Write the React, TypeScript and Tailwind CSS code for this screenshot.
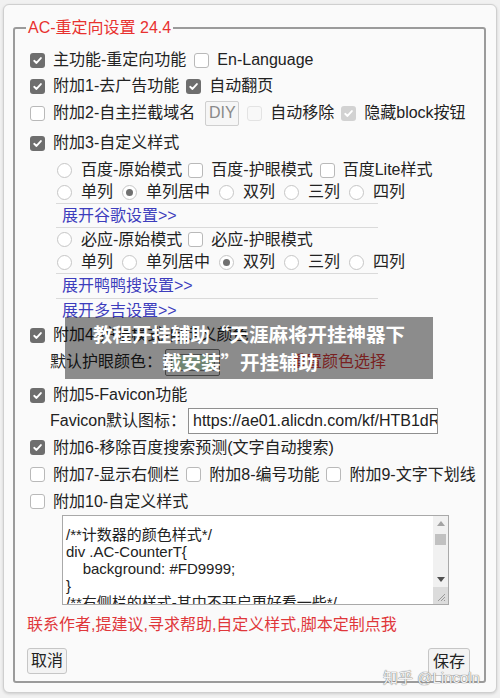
import React from 'react';

type OptProps = {
  label: string;
  on?: boolean;
  radio?: boolean;
  disabled?: boolean;
  className?: string;
};

function Box({ on = false, disabled = false }: { on?: boolean; disabled?: boolean }) {
  if (on) {
    return (
      <span
        className={`inline-flex h-[15px] w-[15px] shrink-0 items-center justify-center rounded-[3px] ${
          disabled ? 'bg-[#d2d2d2]' : 'bg-[#6e6e6e]'
        }`}
      >
        <svg viewBox="0 0 12 12" className="h-[11px] w-[11px]">
          <path d="M2.4 6.3 L4.9 8.7 L9.7 3.3" fill="none" stroke="white" strokeWidth="2" strokeLinecap="round" strokeLinejoin="round" />
        </svg>
      </span>
    );
  }
  return (
    <span
      className={`inline-block h-[15px] w-[15px] shrink-0 rounded-[3px] border ${
        disabled ? 'border-[#e3e3e3] bg-[#f8f8f8]' : 'border-[#b9b9b9] bg-white'
      }`}
    />
  );
}

function Dot({ on = false }: { on?: boolean }) {
  return (
    <span className="inline-flex h-[15px] w-[15px] shrink-0 items-center justify-center rounded-full border border-[#c6c6c6] bg-white">
      {on && <span className="h-[7px] w-[7px] rounded-full bg-[#707070]" />}
    </span>
  );
}

function Opt({ label, on, radio, disabled, className = '' }: OptProps) {
  return (
    <span className={`flex items-center ${className}`}>
      {radio ? <Dot on={on} /> : <Box on={on} disabled={disabled} />}
      <span className={radio ? 'ml-[9px]' : 'ml-[8px]'}>{label}</span>
    </span>
  );
}

function Divider() {
  return <div className="ml-[30px] h-px w-[322px] bg-[#dadada]" />;
}

function LinkRow({ text, h }: { text: string; h: string }) {
  return (
    <div className={`flex items-center pl-[36px] text-[#3d3dbd] ${h}`}>{text}</div>
  );
}

function Columns({ picked }: { picked: number }) {
  const cols = ['单列', '单列居中', '双列', '三列', '四列'];
  return (
    <>
      {cols.map((c, i) => (
        <Opt key={c} radio label={c} on={i === picked} className="mr-[9px]" />
      ))}
    </>
  );
}

export default function App() {
  return (
    <div className="relative min-h-screen w-full bg-[#f1f1f1] pl-[3px] pt-[4px] font-['Liberation_Sans','Noto_Sans_CJK_SC',sans-serif] text-[16px] text-[#222]">
      <div className="h-[689px] w-[494px] rounded-[6px] border border-[#cfcfcf] bg-[#fafafa] pl-[9px] pr-[10px] pt-[13px] shadow-[0_1px_3px_rgba(0,0,0,0.15)]">
        <fieldset className="min-w-0 rounded-[3px] border-2 border-[#9b9b9b] px-[11px] pb-[5px]">
          <legend className="px-[2px] leading-[20px] text-[#e8312f]">AC-重定向设置 24.4</legend>

          <div className="whitespace-nowrap pt-[9px]">
            <div className="flex h-[26px] items-center pl-[4px]">
              <Opt on label="主功能-重定向功能" className="mr-[8px]" />
              <Opt label="En-Language" />
            </div>
            <div className="flex h-[26px] items-center pl-[4px]">
              <Opt on label="附加1-去广告功能" className="mr-[7px]" />
              <Opt on label="自动翻页" />
            </div>
            <div className="flex h-[28px] items-center pl-[4px]">
              <Opt label="附加2-自主拦截域名" className="mr-[10px]" />
              <span className="flex h-[25px] w-[34px] items-center justify-center rounded-[2px] border border-[#cfcfcf] bg-[#f6f6f6] text-[#8a8a8a]">
                DIY
              </span>
              <Opt disabled label="自动移除" className="ml-[8px] mr-[7px]" />
              <Opt disabled on label="隐藏block按钮" />
            </div>
            <div className="flex h-[32px] items-center pl-[4px]">
              <Opt on label="附加3-自定义样式" />
            </div>

            {/* 百度 */}
            <div className="flex h-[22px] items-center pl-[31px]">
              <Opt radio label="百度-原始模式" className="mr-[6px]" />
              <Opt label="百度-护眼模式" className="mr-[7px]" />
              <Opt label="百度Lite样式" />
            </div>
            <div className="flex h-[22px] items-center pl-[31px]">
              <Columns picked={1} />
            </div>
            <Divider />
            <LinkRow text="展开谷歌设置>>" h="h-[23px]" />
            <Divider />

            {/* 必应 */}
            <div className="flex h-[23px] items-center pl-[31px]">
              <Opt radio label="必应-原始模式" className="mr-[6px]" />
              <Opt label="必应-护眼模式" />
            </div>
            <div className="flex h-[22px] items-center pl-[31px]">
              <Columns picked={2} />
            </div>
            <Divider />
            <LinkRow text="展开鸭鸭搜设置>>" h="h-[24px]" />
            <Divider />
            <LinkRow text="展开多吉设置>>" h="h-[23px]" />

            <div className="flex h-[26px] items-center pl-[4px]">
              <Opt on label="附加4-护眼模式-自定义颜色" />
            </div>
            <div className="flex h-[28px] items-center pl-[24px]">
              <span>默认护眼颜色：</span>
              <span className="ml-[3px] flex h-[27px] w-[55px] items-center justify-center rounded-[2px] border border-[#7a7a7a] bg-[#efefef]">
                <span className="h-[17px] w-[44px] border border-[#8a8a8a] bg-[#c7edcc]" />
              </span>
              <span className="ml-[70px] text-[#d83a3a]">重置颜色选择</span>
            </div>
            <div className="mt-[6px] flex h-[26px] items-center pl-[4px]">
              <Opt on label="附加5-Favicon功能" />
            </div>
            <div className="flex h-[26px] items-center pl-[24px]">
              <span className="w-[138px]">Favicon默认图标：</span>
              <span className="flex h-[26px] w-[250px] items-center overflow-hidden border border-[#8f8f8f] bg-white pl-[4px]">
                https://ae01.alicdn.com/kf/HTB1dR'Y
              </span>
            </div>
            <div className="flex h-[27px] items-center pl-[4px]">
              <Opt on label="附加6-移除百度搜索预测(文字自动搜索)" />
            </div>
            <div className="flex h-[27px] items-center pl-[4px]">
              <Opt label="附加7-显示右侧栏" className="mr-[7px]" />
              <Opt label="附加8-编号功能" className="mr-[7px]" />
              <Opt label="附加9-文字下划线" />
            </div>
            <div className="flex h-[27px] items-center pl-[4px]">
              <Opt label="附加10-自定义样式" />
            </div>

            {/* 自定义样式 textarea */}
            <div className="ml-[36px] flex h-[90px] w-[387px] border border-[#a9a9a9] bg-white">
              <div className="flex-1 overflow-hidden whitespace-pre pl-[3px] pt-[10px] text-[15px] leading-[17px] text-[#222]">
                {'/**计数器的颜色样式*/\ndiv .AC-CounterT{\n    background: #FD9999;\n}\n/**右侧栏的样式-其中不开启更好看一些*/'}
              </div>
              <div className="flex w-[15px] flex-col bg-[#f1f1f1]">
                <div className="flex h-[15px] items-center justify-center">
                  <svg viewBox="0 0 8 5" className="h-[5px] w-[8px]">
                    <path d="M4 0 L8 5 L0 5 Z" fill="#a3a3a3" />
                  </svg>
                </div>
                <div className="mx-[2px] mt-[3px] h-[11px] bg-[#c1c1c1]" />
                <div className="flex-1" />
                <div className="flex h-[15px] items-center justify-center">
                  <svg viewBox="0 0 8 5" className="h-[5px] w-[8px]">
                    <path d="M0 0 L8 0 L4 5 Z" fill="#505050" />
                  </svg>
                </div>
                <div className="flex h-[17px] items-end justify-end bg-[#dcdcdc] p-[2px]">
                  <svg viewBox="0 0 10 10" className="h-[10px] w-[10px]">
                    <path d="M9 2 L2 9 M9 5 L5 9 M9 8 L8 9" stroke="#9a9a9a" strokeWidth="1" />
                  </svg>
                </div>
              </div>
            </div>

            <div className="mt-[7px] flex h-[26px] items-center pl-[1px] text-[#e0373a]">
              联系作者,提建议,寻求帮助,自定义样式,脚本定制点我
            </div>

            <div className="mt-[10px] flex items-start justify-between pl-[1px] pr-[3px]">
              <button className="flex h-[26px] items-center rounded-[3px] border border-[#c6c6c6] bg-[#f3f3f3] px-[3px]">
                取消
              </button>
              <button className="flex h-[28px] items-center rounded-[3px] border border-[#c6c6c6] bg-[#f3f3f3] px-[4px]">
                保存
              </button>
            </div>
          </div>
        </fieldset>
      </div>

      {/* 图片上的标题浮层 */}
      <div className="absolute left-[65px] top-[317px] h-[62px] w-[368px] bg-[rgba(0,0,0,0.44)] pt-[3px] text-center font-['Noto_Sans_CJK_SC',sans-serif] text-[19.5px] font-bold leading-[28px] text-white">
        <div>教程开挂辅助“天涯麻将开挂神器下</div>
        <div className="pr-[18px]">载安装”开挂辅助</div>
      </div>

      {/* 水印 */}
      <div className="absolute left-[383px] top-[667px] text-[15px] text-[#f2f2f2] [text-shadow:0_0_1px_#777,0_0_1px_#777]">
        知乎 @Lincoln
      </div>
    </div>
  );
}
